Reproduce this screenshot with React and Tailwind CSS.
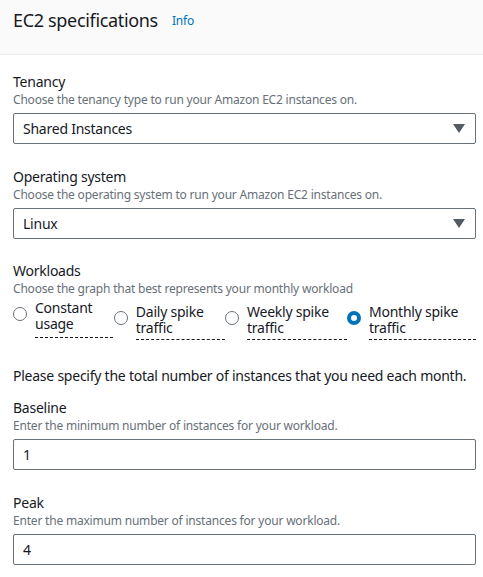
import React from "react";

const font = { fontFamily: '"Noto Sans", "Open Sans", Arial, sans-serif' };

function Caret() {
  return (
    <svg width="12" height="9" viewBox="0 0 12 9" className="shrink-0">
      <path d="M0 0 H12 L6 9 Z" fill="#545b64" />
    </svg>
  );
}

function Select({ value }) {
  return (
    <div className="flex items-center justify-between h-[31px] border border-[#687078] rounded-[2px] pl-[9px] pr-[10px] text-[14px] tracking-[-0.24px] text-[#16191f]">
      <span>{value}</span>
      <Caret />
    </div>
  );
}

function Field({ label, desc, children }) {
  return (
    <div className="flex flex-col">
      <div className="text-[14px] leading-[20px] tracking-[-0.24px] text-[#16191f]">{label}</div>
      <div className="text-[12px] leading-[16px] tracking-[-0.2px] text-[#687078] mb-[5px]">{desc}</div>
      {children}
    </div>
  );
}

function Radio({ checked }) {
  if (checked) {
    return <span className="block w-[14px] h-[14px] rounded-full border-[4px] border-[#0073bb] bg-white shrink-0" />;
  }
  return <span className="block w-[14px] h-[14px] rounded-full border border-[#687078] bg-white shrink-0" />;
}

const workloads = [
  { l1: "Constant", l2: "usage", w: "w-[101px]", lw: "w-[78px]", top: "mt-0 pb-[5px]", rtop: "mt-[7px]" },
  { l1: "Daily spike", l2: "traffic", w: "w-[111px]", lw: "w-[90px]", top: "mt-[4px] pb-[3px]", rtop: "mt-[11px]" },
  { l1: "Weekly spike", l2: "traffic", w: "w-[122px]", lw: "w-[100px]", top: "mt-[4px] pb-[3px]", rtop: "mt-[11px]" },
  { l1: "Monthly spike", l2: "traffic", w: "w-[129px]", lw: "w-[107px]", top: "mt-[4px] pb-[3px]", rtop: "mt-[11px]", checked: true },
];

export default function App() {
  return (
    <div className="w-[483px] h-[577px] bg-white overflow-hidden" style={font}>
      <div className="h-[55px] bg-[#fafafa] border-b border-[#eaeded] px-[13px] pt-[8px] flex items-start">
        <h2 className="text-[18px] leading-[24px] tracking-[-0.33px] text-[#16191f]">EC2 specifications</h2>
        <span className="ml-[14px] mt-[5px] text-[12px] leading-[16px] tracking-[-0.2px] text-[#0073bb]">Info</span>
      </div>

      <div className="pl-[13px] pr-[7px] pt-[17px] flex flex-col">
        <Field label="Tenancy" desc="Choose the tenancy type to run your Amazon EC2 instances on.">
          <Select value="Shared Instances" />
        </Field>

        <div className="mt-[23px]">
          <Field label="Operating system" desc="Choose the operating system to run your Amazon EC2 instances on.">
            <Select value="Linux" />
          </Field>
        </div>

        <div className="mt-[22px] flex flex-col">
          <div className="text-[14px] leading-[20px] tracking-[-0.24px] text-[#16191f]">Workloads</div>
          <div className="text-[12px] leading-[16px] tracking-[-0.2px] text-[#687078]">Choose the graph that best represents your monthly workload</div>
          <div className="flex mt-[3px]">
            {workloads.map((w) => (
              <div key={w.l1} className={"flex items-start " + w.w}>
                <div className={"w-[22px] " + w.rtop}>
                  <Radio checked={w.checked} />
                </div>
                <div
                  className={
                    "text-[14px] leading-[16px] tracking-[-0.24px] text-[#16191f] border-b border-dashed border-[#16191f] " +
                    w.lw +
                    " " +
                    w.top
                  }
                >
                  {w.l1}
                  <br />
                  {w.l2}
                </div>
              </div>
            ))}
          </div>
        </div>

        <div className="mt-[26px] text-[14px] leading-[20px] tracking-[-0.24px] whitespace-nowrap text-[#16191f]">
          Please specify the total number of instances that you need each month.
        </div>

        <div className="mt-[12px]">
          <Field label="Baseline" desc="Enter the minimum number of instances for your workload.">
            <div className="h-[31px] border border-[#687078] rounded-[2px] pl-[9px] flex items-center text-[14px] text-[#16191f]">1</div>
          </Field>
        </div>

        <div className="mt-[23px]">
          <Field label="Peak" desc="Enter the maximum number of instances for your workload.">
            <div className="h-[31px] border border-[#687078] rounded-[2px] pl-[9px] flex items-center text-[14px] text-[#16191f]">4</div>
          </Field>
        </div>
      </div>
    </div>
  );
}
